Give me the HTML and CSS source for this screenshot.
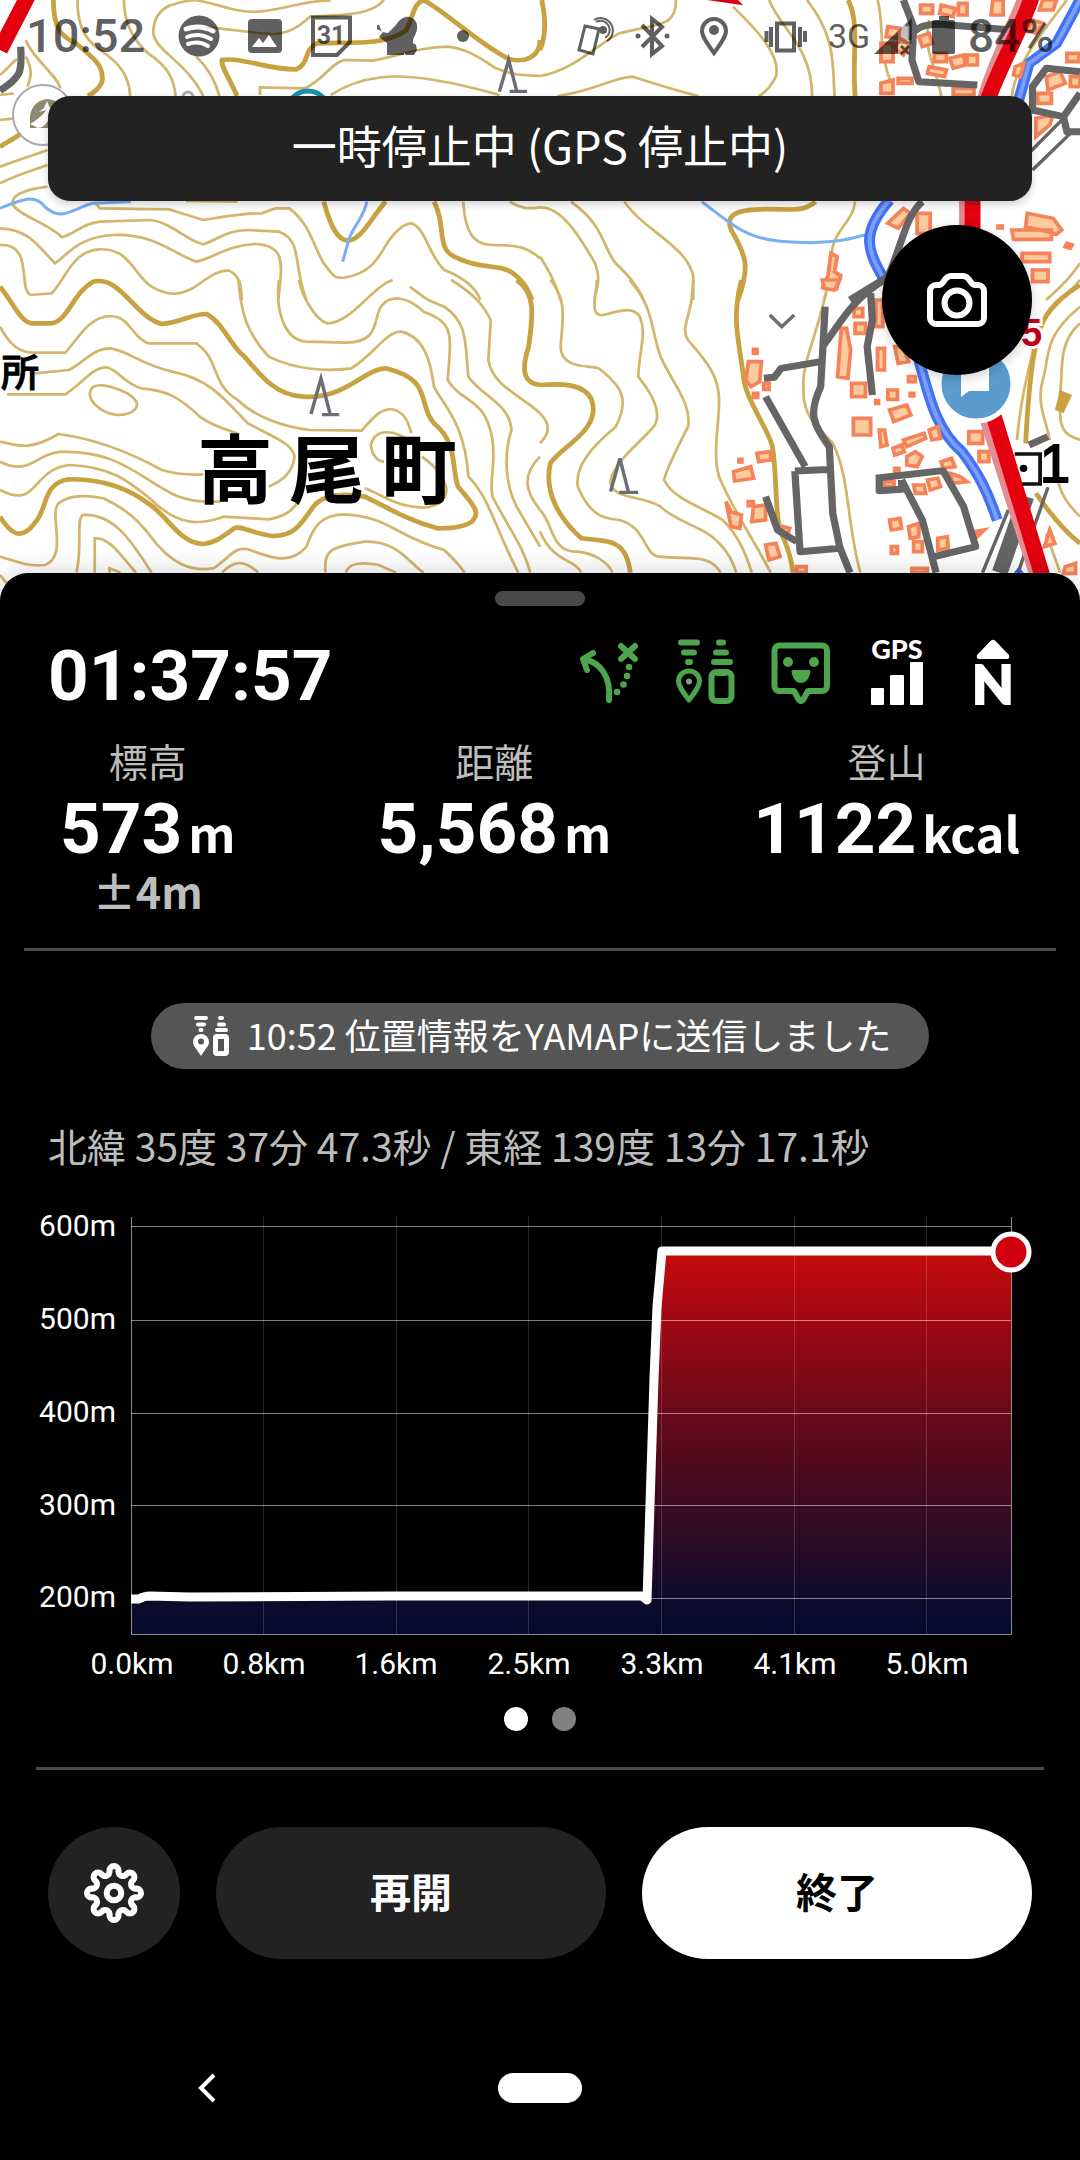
FILE: index.html
```html
<!DOCTYPE html>
<html lang="ja">
<head>
<meta charset="utf-8">
<meta name="viewport" content="width=device-width, initial-scale=1">
<title>YAMAP 活動記録</title>
<link rel="stylesheet" href="styles.css">
</head>
<body>
<main class="screen">
  <section class="stage">
    <svg class="map" viewBox="0 0 1080 604" preserveAspectRatio="xMidYMin slice" role="img" aria-label="高尾町の地図">
      <!-- north-west sheet -->
      <g transform="scale(.3444 .3333)">
        <g class="contour">
          <path d="M225 0C225 60 235 110 290 150C350 190 375 230 378 288M360 0C360 50 375 110 430 160C490 200 505 240 510 288M1115 0C1080 45 1000 45 900 50C870 80 840 100 800 102C740 102 660 85 600 82M560 0C500 10 450 20 445 90C440 150 540 180 590 288M560 0C620 5 680 40 750 35C830 30 880 0 960 2M570 170C600 200 625 240 637 288M755 285V262L885 265C940 240 960 190 1000 180L1080 182C1150 170 1220 140 1300 140C1370 150 1400 180 1440 205C1500 230 1530 225 1568 228M960 285C1050 225 1150 220 1260 240C1350 255 1400 270 1450 285M75 120C90 170 170 230 175 265M0 225C30 200 40 180 50 178M75 170C100 220 85 240 80 260M0 285L40 280"/>
          <path d="M138 560C60 570 30 590 38 615C60 650 140 670 180 712C220 700 240 670 290 665L440 660C500 670 540 720 590 733C630 720 660 690 720 690L810 695C880 720 850 800 890 900M0 500C50 480 100 465 138 450M0 550C60 520 100 510 138 495M0 360L40 355M275 605L290 625L490 628L590 660C650 650 700 640 760 640L800 625H840C900 670 910 740 940 790C970 830 970 835 1000 833C1080 820 1100 770 1130 720C1160 680 1180 670 1195 670C1240 690 1240 760 1290 810C1340 830 1380 860 1395 900M0 685C90 690 110 740 160 790C200 760 230 710 330 705C450 700 500 760 570 785C610 780 660 735 740 732C830 735 820 790 808 900M0 735C100 730 50 870 90 885L150 880C190 840 210 750 290 748C380 745 390 830 440 860C490 890 520 885 560 865C620 820 640 810 665 812C700 830 700 860 702 900M1345 605C1350 690 1370 735 1430 735C1500 735 1530 740 1568 775M1480 605C1520 630 1540 625 1568 622M540 603L690 604"/>
        </g>
        <g class="contour contour-major">
          <path d="M155 0C155 90 180 110 220 130C280 180 300 200 297 240C295 260 270 280 255 288M688 288C670 240 640 200 645 180C700 170 780 210 860 208C900 190 880 150 920 130C1000 125 1120 140 1180 90C1200 50 1200 10 1230 0C1300 40 1400 140 1480 178C1540 190 1568 160 1568 120M0 440C40 415 80 395 80 370M940 605C960 680 980 720 1010 722C1050 720 1080 650 1120 605M1260 605C1300 680 1260 750 1330 775C1400 810 1450 790 1490 820C1530 850 1535 880 1545 900"/>
        </g>
        <path class="stream" d="M0 625C60 600 100 580 130 620C180 670 220 620 270 610L380 605M1065 605C1060 650 1010 700 1010 730L995 785"/>
        <path class="road" d="M60 140C65 220 60 230 0 272"/>
        <path class="highway" d="M85 -20L0 150"/>
        <path class="tree" d="M1450 275L1477 180L1500 272M1480 274H1530"/>
      </g>
      <!-- north-east sheet -->
      <g transform="translate(540 0) scale(.3444 .3333)">
        <g class="contour">
          <path d="M395 0C395 80 350 70 230 100C170 130 100 210 0 228M50 288C150 275 220 230 270 230C330 250 390 270 460 288M560 20C640 100 700 170 685 230C670 260 650 280 635 288M665 0C700 90 790 140 790 288M775 0C860 110 850 200 855 288M980 0C1000 70 980 150 1020 250M1130 60C1110 150 1150 200 1165 288M1370 288C1380 200 1440 120 1530 0M0 622C60 620 110 700 160 790C180 850 160 870 158 900M90 605C190 680 180 740 220 790C260 830 290 870 300 900M245 605C300 690 430 740 445 830V900M0 770C40 830 50 870 60 900M915 605C910 660 860 690 850 740C840 800 840 860 825 900M1568 790C1530 850 1490 880 1470 900"/>
        </g>
        <path class="contour contour-major" d="M0 150C20 100 15 50 5 0M895 0C930 80 905 160 915 288M800 605C760 640 720 625 640 628C560 630 540 650 555 690C600 770 610 800 575 900"/>
        <path class="stream" d="M470 605C600 710 620 725 790 728C880 725 900 715 945 705"/>
        <path class="river" d="M1568 0L1500 130L1420 190L1390 300M1015 600C930 700 950 750 1000 840"/>
        <path class="river-core" d="M1568 0L1500 130L1420 190L1390 300M1015 600C930 700 950 750 1000 840"/>
        <path class="building" d="M1105 15h35v25h-35zM1165 15l40 10-5 25-40-10zM1215 10h25v35h-25zM1315 0h30v45h-35zM1460 0h40l-10 30h-40zM1010 80l35 5-5 30-35-5zM990 130h35v55h-35zM1045 115l30 20-20 30-25-20zM1100 110l30-10 10 30-30 10zM1145 160h35v25h-35zM1190 175l40-10 5 30-35 10zM1240 165h30v30h-30zM1130 200l50 10-5 20-50-10zM990 250l35-10v40h-35zM1040 235h40v15h-40zM1200 265h60v20h-60zM1340 120l40 10-20 35-30-10zM1380 200l25-10-10 40-20-5zM1430 60l30 10-20 30-25-10zM1470 230l40-15 15 35-50 20zM1530 160h35v25h-35zM1540 230h28v30h-28zM1445 280h40v30h-40zM1440 355l50-10-10 30-40 35z"/>
        <path class="building" d="M1010 670l45-45 20 15-35 45zM1095 640h38v60h-38zM1415 640l75 15 25 35-15 12-90-22zM1370 690h115v28h-110zM1400 760h80v25h-80zM1430 810h45v35h-45zM1530 730l15 5-5 10-15-5zM845 760l18 10-8 45 18 12-12 40-40-5 15-35zM1330 678h12v6h-12z"/>
        <path class="road" d="M1055 0L1085 80L1080 180L1100 245L1270 255M1085 95C1110 70 1150 70 1190 75L1370 90M1568 215L1470 205L1430 260V330L1520 350L1568 280M1520 350L1530 395H1568M1110 605C1060 650 1050 740 1010 830L900 900"/>
        <path class="track" d="M1520 355L1400 480M1540 400L1430 510"/>
        <path class="highway-shade" d="M1405 -10C1380 60 1310 200 1285 300M1234 600V690"/>
        <path class="highway" d="M1428 -10C1405 70 1330 210 1300 300M1256 600V690"/>
        <path class="highway-fill" d="M485 0L590 16L575 0Z"/>
      </g>
      <!-- south-west sheet -->
      <g transform="translate(0 280) scale(.3444 .3333)">
        <g class="contour">
          <path d="M692 0C700 90 710 150 780 230C860 270 950 275 1020 265C1090 220 1120 155 1165 155C1230 170 1250 240 1260 320C1290 380 1350 430 1360 590C1420 650 1440 750 1505 878M810 0C800 80 820 180 890 185L1000 188C1110 190 1080 110 1110 75C1140 40 1190 55 1230 95C1320 130 1310 160 1300 300C1340 370 1410 350 1430 480C1440 560 1420 600 1430 650C1480 750 1520 800 1540 878M868 0C880 60 920 120 950 130C1020 130 1080 20 1140 0M1190 20C1240 60 1240 60 1290 80C1360 130 1350 190 1360 290C1400 350 1480 370 1485 450C1460 530 1470 620 1500 680L1568 800M1310 0C1390 50 1410 90 1425 120L1418 240C1430 320 1520 350 1568 400M1568 530C1510 590 1530 640 1568 690"/>
          <path d="M0 140C30 200 60 215 90 218H190C230 170 260 110 320 108C380 110 380 170 430 190H570C640 240 610 310 690 360C740 410 820 440 900 450L1050 452C1080 420 1100 385 1140 388C1180 400 1185 430 1195 460M100 280L200 270C240 250 270 205 320 205C380 215 400 250 500 275C620 300 660 370 720 430C790 470 850 490 855 530C850 590 800 610 780 620M20 343H190C240 310 270 260 310 262C350 275 360 310 410 325C480 330 520 350 580 410C620 440 660 450 690 460M262 335C270 300 330 320 370 340C430 380 380 405 340 405C290 400 255 360 262 335ZM0 485C60 500 90 510 170 462C300 480 400 530 470 570C520 585 560 585 590 583M0 545C90 590 100 520 180 515C330 515 380 570 480 630C540 670 600 665 640 665M0 630C110 690 90 570 200 555C330 560 380 610 440 660C520 740 580 735 650 710L780 718C830 710 850 690 870 660"/>
          <path d="M0 830C60 850 90 860 130 855C200 830 140 700 170 670C200 645 250 645 300 655C370 690 400 720 430 760C500 860 560 875 620 865C670 830 680 800 720 808C780 830 840 860 890 800C910 740 930 705 1000 703C1130 710 1150 770 1290 810C1320 840 1340 860 1348 878M222 878C240 800 220 720 240 705C330 700 380 780 440 878M275 878V775C320 770 360 840 395 878M318 878V865L350 878M645 878C680 840 710 840 750 878M945 878C940 810 960 800 1060 785C1150 780 1190 850 1230 878M1005 878C1010 850 1050 845 1100 855L1150 878M1200 490C1150 450 1090 440 1077 495C1080 530 1100 545 1115 545M1060 625C1120 650 1150 680 1230 683C1290 680 1300 640 1295 620C1280 570 1250 550 1225 530M0 885L20 910"/>
        </g>
        <path class="contour contour-major" d="M0 20C40 70 60 130 95 130H150C200 120 210 40 270 5C350 -15 390 110 470 132C520 130 560 100 600 102C650 130 670 200 710 230C760 290 800 345 880 350C1000 360 1060 265 1120 265C1260 300 1210 370 1260 430C1330 490 1310 560 1330 620C1390 690 1390 700 1370 725C1340 745 1300 745 1270 745C1180 720 1120 680 1060 650C1000 640 940 640 910 680C870 740 850 770 790 768C730 760 700 735 680 745C640 775 620 790 590 792C520 790 490 710 430 670C380 630 300 595 200 598C120 610 140 690 100 730C60 785 30 760 0 710M1500 0C1560 40 1545 120 1535 200C1510 280 1525 310 1568 315"/>
        <path class="tree" d="M903 402L932 296L958 400M935 404H985"/>
      </g>
      <!-- south-east sheet -->
      <g transform="translate(540 280) scale(.3444 .3333)">
        <g class="contour">
          <path d="M30 0C80 60 65 120 60 200C60 270 150 255 170 265C240 320 260 360 220 440C150 500 100 560 110 620C150 720 200 715 230 720C310 740 300 830 350 830C440 840 490 820 525 878M165 0C165 50 140 110 185 105C240 90 270 80 290 110C310 160 290 200 285 290C340 360 350 410 330 440C290 490 220 540 205 600C200 660 300 645 350 680C400 730 480 740 520 790C550 820 560 850 570 878M260 0C330 80 320 140 350 230C390 320 440 370 430 440C400 500 370 560 360 600C390 660 470 680 530 720C580 770 600 830 615 878M445 0L440 60C430 120 410 150 430 180C470 230 520 280 520 360C520 440 500 520 520 590C560 690 610 760 670 878M0 400C30 430 30 460 0 490M0 690C40 730 30 820 110 815C160 820 200 850 210 878M0 755C40 850 100 835 120 878M830 40C800 180 760 250 765 320C760 420 820 450 850 490C900 590 890 730 930 878"/>
          <path d="M1568 0C1500 80 1450 120 1440 160C1430 250 1400 300 1385 480M1568 80C1460 170 1480 230 1460 300C1440 370 1470 420 1480 480M1568 130C1500 190 1520 280 1510 340V400C1510 460 1540 470 1568 480M1500 560C1500 640 1540 680 1568 710M1470 760L1510 878"/>
        </g>
        <path class="contour contour-major" d="M0 315C60 310 130 310 150 360C180 450 60 500 30 550C10 640 60 720 120 775C190 785 250 770 262 878M585 0C560 100 570 150 590 280C590 350 660 440 675 500C690 600 680 700 700 760C720 800 730 840 735 878M1568 15C1500 60 1450 100 1435 220C1420 300 1415 400 1410 490M1440 640C1480 700 1530 760 1568 790"/>
        <path class="contour-block" d="M1510 330l35 15-25 55-25-10z"/>
        <path class="river" d="M1100 240C1130 350 1150 450 1225 515C1280 590 1300 640 1328 720"/>
        <path class="river-core" d="M1100 240C1130 350 1150 450 1225 515C1280 590 1300 640 1328 720"/>
        <path class="building" d="M820 0h50l-15 30-30-5zM605 245h38l-5 60-25 15-15-20zM620 208h10v12h-10zM650 310h15v18h-15zM620 340h12v12h-12zM630 520l40-5v25l-35 5zM578 538h8v8h-8zM562 575l50-15 8 35-55 8zM540 665l15 30 30 10-5 40-25-5zM620 680l35-5v45l-40 5zM605 665h14v12h-14zM655 795l30-5 12 40-32 10zM705 740l20 5-5 15-15-5zM745 860h28v18h-28zM875 145h15l12 65-8 85-30-5zM912 85h25v25h-25zM915 130h30v30h-30zM975 60h20v80h-20zM980 205h20v65h-20zM1030 200h25l15 45-30 5zM905 310h40v40h-40zM975 362h8v8h-8zM1010 330h28v28h-28zM1070 290h20v15h-20zM1075 340h10v8h-10zM1015 390l50-15 12 30-50 20zM910 415h50v50h-50zM985 450h15l8 45-18 5zM1025 505l25-10 8 20-28 10zM1055 480l60-20 5 15-55 25zM1130 450l25-10 8 35-25 5zM1245 455h40v35h-40zM1275 515h28v30h-28zM1065 530l25-15 20 15-15 30-30-5zM1165 545l30-10 10 25-35 5zM1190 580l30 10 20 15-40 5zM1030 565h12v18h-12zM1085 615h30l5 25h-30zM1125 600l30-5 8 25-30 10zM1000 605h28v15h-28zM1015 720l30-5 5 30-30 5zM1070 740l30-10v40l-25 5zM1085 785h25v30h-25zM1155 775l28-5 2 35-30 5zM1020 800h18v20h-18zM1265 755l25-5-20 20zM1480 750l15 40-30 10zM1525 860l30-10v30h-35zM1080 865h45v13h-45z"/>
        <path class="road" d="M1000 0C900 60 860 150 820 200M828 80L815 320C780 400 790 430 840 500L850 700L870 800L900 878M650 295L680 292L700 265L815 245M655 350L770 560M740 573L850 568M740 573L755 815L870 805M655 650L690 750L745 785M960 40L965 120L950 200L965 345M975 595L1170 572L1230 680L1265 800L1145 830M1050 600L1110 720L1150 878M985 595V632L1050 628V600M1420 495L1475 470"/>
        <path class="track" d="M1285 878L1360 690M1388 878L1475 622"/>
        <path class="road-wide" d="M1335 878L1412 650"/>
        <path class="river-bit" d="M1375 878L1390 862L1405 878Z"/>
        <path class="highway-shade" d="M1294 420L1438 885"/>
        <path class="highway" d="M1318 410L1458 885"/>
        <path class="benchmark" d="M1378 522H1452V612H1400"/>
        <circle cx="1404" cy="565" r="11"/>
        <path class="valley-mark" d="M667 105L702 140L738 105"/>
        <path class="tree" d="M205 635L232 535L257 637M230 637H285"/>
      </g>
      <g class="poi">
        <circle class="poi-ring" cx="43" cy="115" r="30"/>
        <path class="poi-peak" d="M30 128V116Q32 102 46 99Q56 99 62 106L60 128Z"/>
        <path class="poi-flag" d="M30 124Q42 117 46 110L39 112L44 108L47 101L50 108L56 112L50 116Q46 128 38 128Z"/>
        <circle class="poi-teal" cx="308" cy="112" r="21"/>
        <circle class="poi-small" cx="188" cy="97" r="5"/>
        <circle class="poi-blue" cx="976" cy="384" r="37"/>
        <path class="poi-flag" d="M961 368H989V391H969L961 397Z"/>
      </g>
      <text class="place" x="198 290 382" y="497">高尾町</text>
      <text class="place-small" x="1" y="386">所</text>
      <text class="route-number" x="1021" y="346">5</text>
      <text class="point-number" x="1040" y="482">1</text>
    </svg>

    <div class="overlay">
      <div class="status-bar">
        <span class="clock">10:52</span>
        <svg class="notices" viewBox="166 0 330 72" aria-hidden="true">
          <circle cx="199" cy="36" r="20.500"/>
          <path class="cut" stroke-width="5" d="M186 29Q200 24 213 31"/>
          <path class="cut" stroke-width="4" d="M187 37Q199 32 211 39M188 44Q199 40 208 46"/>
          <path fill-rule="evenodd" d="M252 19h26a4 4 0 0 1 4 4v26a4 4 0 0 1-4 4h-26a4 4 0 0 1-4-4V23a4 4 0 0 1 4-4zM252 47h25l-8-12-6 8-4-5z"/>
          <path class="line" d="M313 17.500H350V42L337 55H313Z"/>
          <text class="day" x="331" y="44" text-anchor="middle">31</text>
          <path d="M377 25l2 0 3 7 6 1 8-8c3-5 8-9 13-8 6 1 9 6 8 12-1 7-5 9-4 14l3 2 1 5-3 5h-8l-2-3v3h-17v-12l-8-6 4-5-6-3z"/>
          <circle cx="463" cy="36" r="6"/>
        </svg>
        <span class="spacer"></span>
        <svg class="signals" viewBox="570 0 246 72" aria-hidden="true">
          <path class="line narrow" d="M585 26l14 3-6 25-14-4z"/>
          <path class="line thin" d="M596 22a9 9 0 1 1 9 16M594 20a12 12 0 1 1 13 21"/><circle cx="603" cy="30" r="4"/>
          <path class="line" d="M642 25L662 46L652 54V19L662 27L642 47"/>
          <circle cx="638" cy="36" r="2.500"/><circle cx="667" cy="36" r="2.500"/>
          <path class="line" d="M714 53C706 42 702 36 702 31a12 12 0 0 1 24 0C726 36 722 42 714 53Z"/><circle cx="714" cy="30" r="5"/>
          <path class="line" d="M777 23.500H794V50.500H777Z"/>
          <path class="line" d="M766.500 31V42M771 27V47M800 27V47M805 31V42"/>
        </svg>
        <span class="network">3G</span>
        <svg class="power" viewBox="866 0 94 72" aria-hidden="true">
          <path d="M874 54L898 31V54Z"/><path d="M898 31L912 17V44H898Z" opacity=".4"/>
          <path class="line narrow" d="M901 46l8 8m0-8l-8 8M906 26l4-4V40"/>
          <path d="M939 20V16H949V20H953a2 2 0 0 1 2 2V52a2 2 0 0 1-2 2H934a2 2 0 0 1-2-2V22a2 2 0 0 1 2-2Z"/>
        </svg>
        <span class="battery">84%</span>
      </div>
      <div class="banner" role="status">一時停止中 (GPS 停止中)</div>
      <button class="camera" type="button" aria-label="カメラ">
        <svg width="60" height="60" viewBox="0 0 60 60" aria-hidden="true">
          <path d="M9 15H12C17 15 17 6 24 6H36C43 6 43 15 48 15H51A6 6 0 0 1 57 21V48A6 6 0 0 1 51 54H9A6 6 0 0 1 3 48V21A6 6 0 0 1 9 15Z"/>
          <circle cx="30" cy="33" r="12.500"/>
        </svg>
      </button>
    </div>
  </section>

  <section class="sheet">
    <div class="handle"></div>
    <div class="summary">
      <time class="elapsed">01:37:57</time>
      <div class="indicators">
        <svg class="green" viewBox="0 0 66 66" role="img" aria-label="ルート">
          <path d="M33 61C35 38 25 23 7 20M17 14L7 20L11 31M45 7L59 20M59 7L45 20"/>
          <g class="solid"><circle cx="53" cy="28" r="3.300"/><circle cx="51" cy="37" r="3.300"/><circle cx="47.500" cy="45.500" r="3.300"/><circle cx="41" cy="53" r="3.300"/></g>
        </svg>
        <svg class="green" viewBox="0 0 66 66" role="img" aria-label="位置情報の送信">
          <path d="M9 3.500H25M12 13.500H22M16 23H18M47 3.500H51M44 13.500H54M42 23H58"/>
          <path stroke-width="5" d="M17 61C10 52 6.500 47 6.500 42A10.500 10 0 0 1 27.500 42C27.500 47 24 52 17 61Z"/>
          <rect x="39.500" y="33" width="20" height="29" rx="5"/>
          <path d="M46 34H53"/><circle class="solid pale" cx="17" cy="42.500" r="3"/>
        </svg>
        <svg class="green" viewBox="0 0 66 66" role="img" aria-label="あいさつ">
          <path d="M11 6.500H54A5 5 0 0 1 59 11.500V47A5 5 0 0 1 54 52H40L35 61Q33 63 31 61L26 52H11A5 5 0 0 1 6.500 47V11.500A5 5 0 0 1 11 6.500Z"/>
          <g class="solid"><circle cx="20" cy="23" r="5"/><circle cx="46" cy="23" r="5"/><path d="M25 31H41Q43 31 42.500 33C41 41 37 44 33 44S25 41 23.500 33Q23 31 25 31Z"/></g>
        </svg>
        <svg class="plain" viewBox="0 0 66 66" role="img" aria-label="GPS 強度">
          <text class="gps-text" x="33" y="20" text-anchor="middle">GPS</text>
          <rect x="7" y="49" width="13" height="17" rx="1"/><rect x="26" y="36" width="14" height="30" rx="1"/><rect x="46" y="23" width="13" height="43" rx="1"/>
        </svg>
        <svg class="plain" viewBox="0 0 66 66" role="img" aria-label="北">
          <path d="M31 1.500Q33 0 35 1.500L49 16Q50 20 47 20H19Q16 20 17 16Z"/>
          <text class="north-text" x="33" y="65" text-anchor="middle">N</text>
        </svg>
      </div>
    </div>

    <dl class="stats">
      <div class="stat"><dt>標高</dt><dd><span class="num">573</span><span class="unit">m</span></dd><dd class="error">±4m</dd></div>
      <div class="stat"><dt>距離</dt><dd><span class="num">5,568</span><span class="unit">m</span></dd></div>
      <div class="stat"><dt>登山</dt><dd><span class="num">1122</span><span class="unit">kcal</span></dd></div>
    </dl>
    <hr class="rule">

    <p class="toast">
      <svg width="36" height="40" viewBox="0 0 36 40" aria-hidden="true">
        <path class="bars" d="M3 2H13M5 8.500H11M7.500 14H8.500M27 2H29M26 8.500H31M24 14H33"/>
        <path fill-rule="evenodd" d="M8 40C3 32 0 30 0 26A8 8 0 0 1 16 26C16 30 13 32 8 40ZM8 22.500a3 3 0 1 0 0 6a3 3 0 1 0 0-6zM24 18H32A4 4 0 0 1 36 22V36A4 4 0 0 1 32 40H24A4 4 0 0 1 20 36V22A4 4 0 0 1 24 18ZM25 23V35H31V23Z"/>
      </svg>
      <span class="toast-text">10:52 位置情報をYAMAPに送信しました</span>
    </p>
    <p class="position">北緯 35度 37分 47.3秒 / 東経 139度 13分 17.1秒</p>

    <svg class="chart" viewBox="0 1200 1080 490" role="img" aria-label="標高グラフ">
      <defs>
        <linearGradient id="relief" gradientUnits="userSpaceOnUse" x1="0" y1="1255" x2="0" y2="1634">
          <stop offset="0" stop-color="#c40b0b"/><stop offset=".17" stop-color="#a00712"/><stop offset=".42" stop-color="#680a1a"/><stop offset=".66" stop-color="#3c0b22"/><stop offset=".9" stop-color="#100b2c"/><stop offset="1" stop-color="#020b30"/>
        </linearGradient>
      </defs>
      <path fill="url(#relief)" d="M131 1599L147 1596L642 1596L647 1600L650 1504L654 1379L657 1307L662 1251H1011V1634H131Z"/>
      <path class="grid-v" d="M263.500 1216V1634M396.500 1216V1634M528.500 1216V1634M661.500 1216V1634M794.500 1216V1634M926.500 1216V1634"/>
      <path class="grid-h" d="M131 1226.500H1011M131 1320.500H1011M131 1413.500H1011M131 1505.500H1011M131 1598.500H1011"/>
      <path class="axis" d="M131.500 1217V1634.500H1011.500V1217"/>
      <path class="trace" d="M131 1599H139Q144 1596 150 1596L190 1597L390 1596L642 1596L647 1600L650 1504L654 1379L657 1307L662 1251H1011"/>
      <circle class="marker" cx="1011" cy="1252" r="18"/>
      <g class="ticks ticks-y"><text x="116" y="1236">600m</text><text x="116" y="1329">500m</text><text x="116" y="1422">400m</text><text x="116" y="1515">300m</text><text x="116" y="1607">200m</text></g>
      <g class="ticks ticks-x"><text x="132" y="1674">0.0km</text><text x="264" y="1674">0.8km</text><text x="396" y="1674">1.6km</text><text x="529" y="1674">2.5km</text><text x="662" y="1674">3.3km</text><text x="795" y="1674">4.1km</text><text x="927" y="1674">5.0km</text></g>
    </svg>

    <div class="pager">
      <button class="dot active" type="button" aria-label="1ページ目"></button>
      <button class="dot" type="button" aria-label="2ページ目"></button>
    </div>
    <hr class="rule rule-short">

    <div class="actions">
      <button class="settings" type="button" aria-label="設定">
        <svg width="60" height="60" viewBox="-30 -30 60 60" aria-hidden="true">
          <path d="M-4.500 -22.500A4.500 4.500 0 0 1 4.500 -22.500A4.500 4.500 0 0 0 12.700 -19.100A4.500 4.500 0 0 1 19.100 -12.700A4.500 4.500 0 0 0 22.500 -4.500A4.500 4.500 0 0 1 22.500 4.500A4.500 4.500 0 0 0 19.100 12.700A4.500 4.500 0 0 1 12.700 19.100A4.500 4.500 0 0 0 4.500 22.500A4.500 4.500 0 0 1 -4.500 22.500A4.500 4.500 0 0 0 -12.700 19.100A4.500 4.500 0 0 1 -19.100 12.700A4.500 4.500 0 0 0 -22.500 4.500A4.500 4.500 0 0 1 -22.500 -4.500A4.500 4.500 0 0 0 -19.100 -12.700A4.500 4.500 0 0 1 -12.700 -19.100A4.500 4.500 0 0 0 -4.500 -22.500Z"/>
          <circle r="7.300"/>
        </svg>
      </button>
      <button class="action" type="button">再開</button>
      <button class="action action-primary" type="button">終了</button>
    </div>
  </section>

  <nav class="system-nav" aria-label="システム">
    <button class="nav-button" type="button" aria-label="戻る">
      <svg width="18" height="30" viewBox="0 0 18 30" aria-hidden="true"><path d="M16 2L3 15L16 28"/></svg>
    </button>
    <button class="nav-button" type="button" aria-label="ホーム"><span class="home"></span></button>
  </nav>
</main>
</body>
</html>
```
FILE: styles.css
```css
* { box-sizing: border-box; }

body {
  margin: 0;
  background: #000;
  color: #fff;
  font-family: "Noto Sans CJK JP", sans-serif;
}

button {
  padding: 0;
  border: 0;
  font: inherit;
  cursor: pointer;
}

.screen {
  display: flex;
  flex-direction: column;
  min-height: 100vh;
}

/* Map and what floats on it */
.stage {
  display: grid;
  background: #fff;
}
.map, .overlay { grid-area: 1 / 1; }
.map { display: block; width: 100%; height: auto; min-height: 604px; }
.overlay { display: flex; flex-direction: column; }

.contour { fill: none; stroke: #d3b56c; stroke-width: 8; }
.contour-major { stroke: #c8a241; stroke-width: 14; }
.contour-block { fill: #c8a241; }
.stream { fill: none; stroke: #77b1f3; stroke-width: 9; }
.river { fill: none; stroke: #4272f2; stroke-width: 32; }
.river-core { fill: none; stroke: #7b9ff9; stroke-width: 12; }
.river-bit { fill: #2f55e0; }
.road { fill: none; stroke: #656565; stroke-width: 21; stroke-linejoin: round; }
.road-wide { fill: none; stroke: #656565; stroke-width: 46; }
.track { fill: none; stroke: #656565; stroke-width: 10; }
.highway { fill: none; stroke: #e3000f; stroke-width: 46; }
.highway-fill { fill: #d8000f; }
.highway-shade { fill: none; stroke: #e58c92; stroke-width: 34; }
.building { fill: #fbcb9e; stroke: #f5835a; stroke-width: 11; }
.benchmark { fill: none; stroke: #111; stroke-width: 11; }
.tree, .valley-mark { fill: none; stroke: #6b6d75; stroke-width: 10; }
.poi-ring { fill: #fff; stroke: #aaa; stroke-width: 2; }
.poi-peak { fill: #8c8a70; }
.poi-teal { fill: #fff; stroke: #1a8fb0; stroke-width: 5; }
.poi-small { fill: #fff; stroke: #aaa; stroke-width: 3; }
.poi-blue { fill: #5a9cce; stroke: #fff; stroke-width: 5; }
.poi-flag { fill: #fff; }
.place { font-size: 74px; font-weight: 500; stroke: #000; stroke-width: 2px; }
.place-small { font-size: 38px; font-weight: 500; stroke: #000; stroke-width: 1px; }
.route-number { fill: #c2001d; font: 700 38px "Liberation Sans", sans-serif; stroke: #fff; stroke-width: 6px; paint-order: stroke; }
.point-number { font: 400 54px "Liberation Sans", sans-serif; stroke: #000; stroke-width: 2px; }

.status-bar {
  display: flex;
  align-items: center;
  height: 72px;
  padding: 0 24px 0 26px;
  color: #000;
  font-family: Roboto, sans-serif;
  font-weight: 500;
  opacity: .62;
}
.clock { width: 140px; font-size: 47px; line-height: 72px; }
.notices { width: 330px; height: 72px; flex: none; }
.signals { width: 246px; height: 72px; flex: none; }
.power { width: 94px; height: 72px; flex: none; }
.spacer { flex: 1; }
.status-bar .cut { fill: none; stroke: #fff; stroke-linecap: round; }
.status-bar .line { fill: none; stroke: #000; stroke-width: 4; }
.status-bar .narrow { stroke-width: 3; }
.status-bar .thin { stroke-width: 2; }
.day { font-size: 25px; font-weight: 700; }
.network { width: 50px; padding-left: 12px; font: 400 34px/72px "Liberation Sans Narrow", Roboto, sans-serif; }
.battery { width: 96px; padding-left: 8px; font-size: 46px; line-height: 72px; white-space: nowrap; }

.banner {
  margin: 24px 48px 0;
  padding-bottom: 8px;
  border-radius: 22px;
  background: #222;
  font-size: 45px;
  line-height: 97px;
  text-align: center;
  box-shadow: 0 3px 9px rgba(0, 0, 0, .2);
}

.camera {
  display: grid;
  place-items: center;
  align-self: flex-end;
  width: 150px;
  height: 150px;
  margin: 24px 48px 0;
  border-radius: 50%;
  background: #000;
  box-shadow: 0 3px 12px rgba(0, 0, 0, .2);
}
.camera svg, .settings svg, .nav-button svg { fill: none; stroke: #fff; stroke-width: 6; }

/* Bottom sheet */
.sheet {
  position: relative;
  display: flex;
  flex-direction: column;
  margin-top: -31px;
  padding-top: 18px;
  border-radius: 28px 28px 0 0;
  background: #000;
  box-shadow: 0 -3px 24px rgba(0, 0, 0, .15);
}
.handle {
  align-self: center;
  width: 90px;
  height: 15px;
  border-radius: 8px;
  background: #4a4a4a;
}
.summary {
  display: flex;
  justify-content: space-between;
  align-items: center;
  height: 66px;
  margin-top: 33px;
  padding: 0 54px 0 48px;
}
.elapsed { padding-top: 8px; font: 700 71px/58px Roboto, sans-serif; }
.indicators { display: flex; gap: 30px; }
.indicators svg { width: 66px; height: 66px; overflow: visible; }
.green { fill: none; stroke: #4da64d; stroke-width: 6; stroke-linecap: round; stroke-linejoin: round; }
.green .solid { fill: #4da64d; stroke: none; }
.green .pale { fill: #7fa37f; }
.plain { fill: #fff; }
.gps-text { font: 900 27px Lato, sans-serif; }
.north-text { font: 900 54px Lato, sans-serif; stroke: #fff; stroke-width: 2px; }

.stats {
  display: flex;
  justify-content: space-between;
  margin: 31px 0 0;
  padding: 0 60px;
}
.stat { text-align: center; }
.stat dt { padding-bottom: 4px; color: #bdbdbd; font-size: 39px; line-height: 48px; }
.stat dd { display: flex; justify-content: center; align-items: baseline; gap: 6px; margin: 0; height: 82px; line-height: 82px; }
.num { font-family: Roboto, sans-serif; font-size: 71px; font-weight: 700; }
.unit { font-size: 49px; font-weight: 700; }
.stat .error { height: 46px; color: #bdbdbd; font-size: 43px; font-weight: 700; line-height: 40px; }

.rule { width: calc(100% - 48px); height: 3px; margin: 32px auto 0; border: 0; background: #4a4a4a; }
.rule-short { width: calc(100% - 72px); margin-top: 36px; }

.toast {
  display: flex;
  align-items: center;
  align-self: center;
  gap: 18px;
  height: 66px;
  margin: 52px 0 0;
  padding: 0 38px 0 42px;
  border-radius: 33px;
  background: #555;
  font-size: 36px;
}
.toast svg { fill: #fff; }
.toast-text { padding-bottom: 4px; }
.toast .bars { stroke: #fff; stroke-width: 4; stroke-linecap: round; }
.position { margin: 54px 48px 0; padding-bottom: 4px; color: #bdbdbd; font-size: 39px; line-height: 44px; }

.chart { display: block; width: 100%; height: auto; margin-top: 29px; }
.grid-v { stroke: rgba(255, 255, 255, .16); }
.grid-h { stroke: rgba(255, 255, 255, .5); }
.axis { fill: none; stroke: rgba(255, 255, 255, .55); }
.trace { fill: none; stroke: #fff; stroke-width: 9; stroke-linejoin: round; }
.marker { fill: #d0000f; stroke: #fff; stroke-width: 5; }
.ticks { fill: #fff; font: 400 30px Roboto, sans-serif; }
.ticks-y { text-anchor: end; }
.ticks-x { text-anchor: middle; }

.pager { display: flex; justify-content: center; gap: 24px; margin-top: 17px; }
.dot { width: 24px; height: 24px; border-radius: 50%; background: #808080; }
.active { background: #fff; }

.actions {
  display: flex;
  gap: 36px;
  margin-top: 57px;
  padding: 0 48px;
}
.settings, .action { height: 132px; border-radius: 66px; background: #222; color: #fff; }
.settings { display: grid; place-items: center; width: 132px; flex: none; }
.action { flex: 1; padding-bottom: 6px; font-size: 41px; font-weight: 700; }
.action-primary { background: #fff; color: #000; }

.system-nav {
  display: grid;
  grid-template-columns: repeat(3, 1fr);
  margin-top: auto;
  padding: 0 40px 36px;
}
.nav-button { display: grid; place-items: center; height: 72px; background: none; }
.nav-button svg { stroke-width: 4; }
.home { width: 84px; height: 30px; border-radius: 15px; background: #fff; }
```
